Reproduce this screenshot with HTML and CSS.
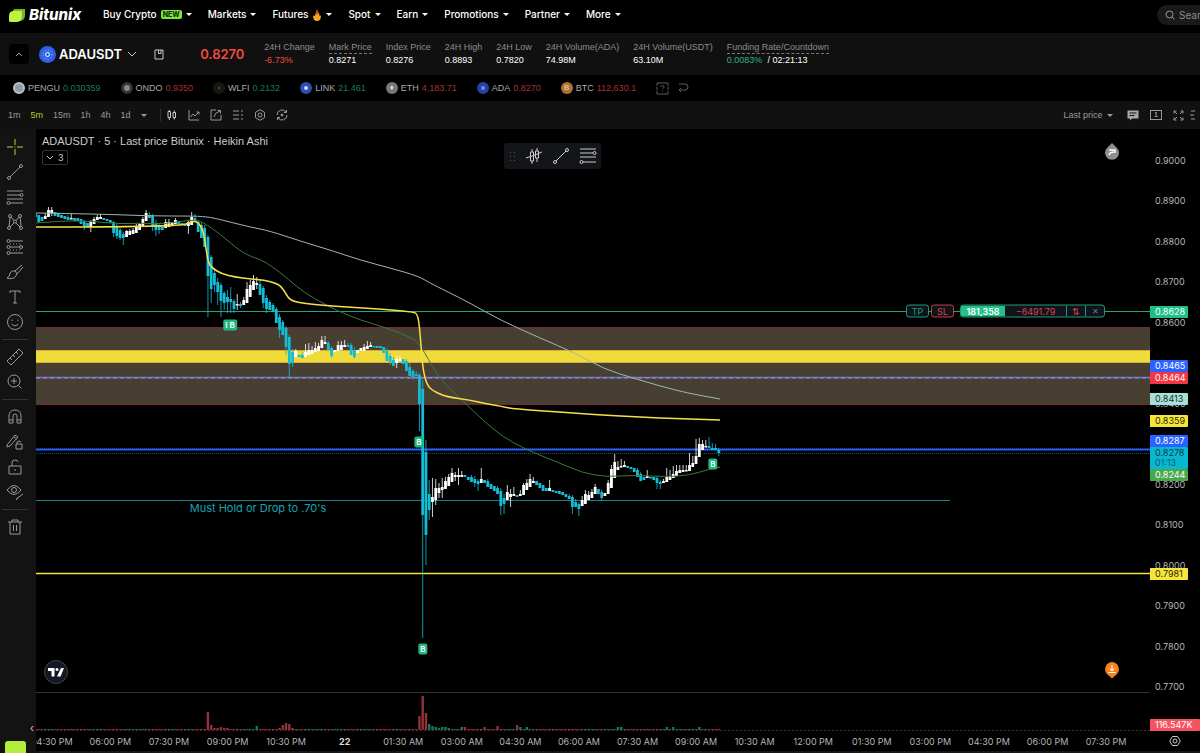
FILE: index.html
```html
<!DOCTYPE html>
<html lang="en">
<head>
  <meta charset="UTF-8" />
  <meta name="viewport" content="width=device-width, initial-scale=1.0"/>
  <title>ADAUSDT | Bitunix</title>
  <link rel="stylesheet" href="styles.css">
</head>
<body>
  <header class="nav">
    <a href="#" class="brand">
      <svg width="16" height="13" viewBox="0 0 16 13"><path d="M4 1.5Q4 0 6 0H16V6Q16 12 10 12H9Z" fill="#7fae28"/><path d="M0 7Q0 2 5 2H13V7Q13 13 7 13H1.5Q0 13 0 11.500Z" fill="#b9f641"/></svg>
      <span>Bitunix</span>
    </a>
    <nav class="menu">
      <a href="#">Buy Crypto <span class="new">NEW</span><i class="caret"></i></a>
      <a href="#">Markets<i class="caret"></i></a>
      <a href="#">Futures
        <svg class="flame" width="8" height="12" viewBox="0 0 8 12"><path d="M4 2Q7 5 6.500 7L8 6.500Q8 12 4 12Q0 12 0 6.500L2 7Q2 4 4 2Z" fill="#f6a61c"/><path d="M4 0Q6 3 5 5.500H3Q3 2 4 0Z" fill="#d9481c"/></svg>
        <i class="caret"></i></a>
      <a href="#">Spot<i class="caret"></i></a>
      <a href="#">Earn<i class="caret"></i></a>
      <a href="#">Promotions<i class="caret"></i></a>
      <a href="#">Partner<i class="caret"></i></a>
      <a href="#">More<i class="caret"></i></a>
    </nav>
    <label class="search">
      <svg width="10" height="10" viewBox="0 0 10 10" class="line"><circle cx="4.500" cy="4.500" r="3.500"/><path d="M7 7l2.500 2.500"/></svg>
      <input type="text" placeholder="Search" aria-label="Search">
    </label>
  </header>

  <section class="info">
    <button class="fold" aria-label="Collapse"><svg width="8" height="5" viewBox="0 0 8 5" class="line"><path d="M1 4l3-3 3 3"/></svg></button>
    <button class="pair">
      <svg width="17" height="17" viewBox="0 0 17 17"><circle cx="8.500" cy="8.500" r="8.500" fill="#2f62e8"/><circle cx="8.500" cy="8.500" r="2" fill="none" stroke="#fff"/><circle cx="8.500" cy="8.500" r="4.500" fill="none" stroke="#a9c0ff" stroke-dasharray="1 2"/></svg>
      <span>ADAUSDT</span>
      <svg width="10" height="6" viewBox="0 0 10 6" class="line bright"><path d="M1 1l4 4 4-4"/></svg>
    </button>
    <button class="book" aria-label="Contract info"><svg width="10" height="11" viewBox="0 0 10 11" class="line bright"><path d="M1 1h8v9H1zM4.500 1v3.500H7V1"/></svg></button>
    <strong class="last">0.8270</strong>
    <dl class="stats">
      <div><dt>24H Change</dt><dd class="down">-6.73%</dd></div>
      <div><dt class="hint">Mark Price</dt><dd>0.8271</dd></div>
      <div><dt>Index Price</dt><dd>0.8276</dd></div>
      <div><dt>24H High</dt><dd>0.8893</dd></div>
      <div><dt>24H Low</dt><dd>0.7820</dd></div>
      <div><dt>24H Volume(ADA)</dt><dd>74.98M</dd></div>
      <div><dt>24H Volume(USDT)</dt><dd>63.10M</dd></div>
      <div><dt class="hint">Funding Rate/Countdown</dt><dd><span class="up">0.0083%</span>&nbsp; / 02:21:13</dd></div>
    </dl>
  </section>

  <section class="strip">
    <a href="#"><i class="coin pengu"></i>PENGU <b class="up">0.030359</b></a>
    <a href="#"><i class="coin ondo"></i>ONDO <b class="down">0.9350</b></a>
    <a href="#"><i class="coin wlfi"></i>WLFI <b class="up">0.2132</b></a>
    <a href="#"><i class="coin link"></i>LINK <b class="up">21.461</b></a>
    <a href="#"><i class="coin eth">♦</i>ETH <b class="down">4,183.71</b></a>
    <a href="#"><i class="coin ada"></i>ADA <b class="down">0.8270</b></a>
    <a href="#"><i class="coin btc">B</i>BTC <b class="down">112,630.1</b></a>
    <span class="strip-tools">
      <svg width="13" height="13" viewBox="0 0 13 13" class="line"><path d="M1 4V1h11v3M1 9v3h11V9M1 5v3M12 5v3M5 5q0-1.500 1.500-1.500T8 5Q8 6 6.500 7M6.500 8.500v1"/></svg>
      <svg width="11" height="10" viewBox="0 0 11 10" class="line"><path d="M1 1h6q3 0 3 3t-3 3H1M3 5L1 7l2 2"/></svg>
    </span>
  </section>

  <section class="toolbar">
    <div class="frames">
      <button>1m</button><button class="on">5m</button><button>15m</button><button>1h</button><button>4h</button><button>1d</button>
      <button aria-label="More intervals"><i class="caret"></i></button>
    </div>
    <div class="tools">
      <button aria-label="Candles"><svg width="12" height="12" viewBox="0 0 12 12" class="line bright"><path d="M2 2.500h2.500v6H2zM7 3.500h2.500v5H7zM3.300 1v1.500M3.300 8.500V11M8.300 1.500v2M8.300 8.500v2"/></svg></button>
      <button aria-label="Indicators"><svg width="12" height="12" viewBox="0 0 12 12" class="line"><path d="M1 1v10h10M2.500 8L5 5l2 2 4-4M8.500 3H11v2.500"/></svg></button>
      <button aria-label="Share"><svg width="12" height="12" viewBox="0 0 12 12" class="line"><path d="M6 1H1v10h10V6M4 8q0-4 6-6M7.500 1.500h3v3"/></svg></button>
      <button aria-label="List"><svg width="12" height="12" viewBox="0 0 12 12" class="line"><path d="M1 2h6M1 6h6M1 10h6M9 2h2M9 6h2M9 10h2"/></svg></button>
      <button aria-label="Settings"><svg width="12" height="12" viewBox="0 0 12 12" class="line"><path d="M6 .7l4.500 2.600v5.400L6 11.300 1.500 8.700V3.300z"/><circle cx="6" cy="6" r="2"/></svg></button>
      <button aria-label="Reset"><svg width="12" height="12" viewBox="0 0 12 12" class="line"><path d="M1 6a5 5 0 0 1 9-3M10.500 1v2.500H8M11 6a5 5 0 0 1-9 3M1.500 11V8.500H4"/><circle cx="6" cy="6" r="1" fill="#999"/></svg></button>
    </div>
    <div class="tools-right">
      <button>Last price <i class="caret"></i></button>
      <button aria-label="Comments"><svg width="12" height="11" viewBox="0 0 12 11"><path d="M.5.500h11v8H5L3 10.500v-2H.5z" fill="#aaa"/><path d="M2.500 3h7M2.500 5.500h5" stroke="#111"/></svg></button>
      <button class="one" aria-label="Layout">1</button>
      <button aria-label="Fullscreen"><svg width="11" height="11" viewBox="0 0 11 11" class="line"><path d="M1 3.500V1h2.500M7.500 1H10v2.500M10 7.500V10H7.500M3.500 10H1V7.500M1 1l3 3M10 1L7 4M10 10L7 7M1 10l3-3"/></svg></button>
      <button aria-label="Panel"><svg width="5" height="10" viewBox="0 0 5 10" class="line"><path d="M1 1h4M0 5h4M1 9h4"/></svg></button>
    </div>
  </section>

  <main class="chart">
    <aside class="draw">
      <button aria-label="Cross"><svg class="line lime" width="18" height="18" viewBox="0 0 18 18"><path d="M9 1v6M9 11v6M1 9h6M11 9h6M9 8.500v1"/></svg></button>
      <button aria-label="Trend line"><svg class="line" width="18" height="18" viewBox="0 0 18 18"><circle cx="3" cy="15" r="1.500"/><circle cx="15" cy="3" r="1.500"/><path d="M4 14L14 4"/></svg></button>
      <button aria-label="Fib"><svg class="line" width="18" height="18" viewBox="0 0 18 18"><path d="M1 3h16M1 7h13M1 11h16M4 15h13"/><circle cx="15.500" cy="7" r="1.500"/><circle cx="2.500" cy="15" r="1.500"/></svg></button>
      <button aria-label="Pattern"><svg class="line" width="18" height="18" viewBox="0 0 18 18"><path d="M3 13.500L4 4.500M5 4l3 3.500M10 7.500L13 4M14.200 4.500l.8 9M4 14l4-4M14 14l-4-4"/><circle cx="3" cy="15" r="1.500"/><circle cx="4" cy="3" r="1.500"/><circle cx="14" cy="3" r="1.500"/><circle cx="15" cy="15" r="1.500"/><circle cx="9" cy="8.500" r="1.500"/></svg></button>
      <button aria-label="Position"><svg class="line" width="18" height="18" viewBox="0 0 18 18"><path d="M4 3h13M4 9h9.500M4 15h13" /><path d="M4 6h12M4 12h12" stroke-dasharray="1 2"/><circle cx="2.500" cy="3" r="1.500"/><circle cx="2.500" cy="9" r="1.500"/><circle cx="15" cy="9" r="1.500"/><circle cx="2.500" cy="15" r="1.500"/></svg></button>
      <button aria-label="Brush"><svg class="line" width="18" height="18" viewBox="0 0 18 18"><path d="M1 15q3-1 3-5 2-3 5-2 3 2 1 5-3 4-9 2zM9 8l7-6M11 11l6-7"/></svg></button>
      <button aria-label="Text"><svg class="line" width="18" height="18" viewBox="0 0 18 18"><path d="M4 5V3h10v2M9 3v12M7 15h4"/></svg></button>
      <button aria-label="Emoji"><svg class="line" width="18" height="18" viewBox="0 0 18 18"><circle cx="9" cy="9" r="7.500"/><path d="M6 6.500v1.500M12 6.500v1.500M5.500 11q3.500 3.500 7 0"/></svg></button>
      <hr>
      <button aria-label="Measure"><svg class="line" width="18" height="18" viewBox="0 0 18 18"><path d="M1 13L13 1l4 4L5 17zM4 10l2 2M7 7l2 2M10 4l2 2"/></svg></button>
      <button aria-label="Zoom"><svg class="line" width="18" height="18" viewBox="0 0 18 18"><circle cx="8" cy="8" r="6"/><path d="M12.500 12.500l3 3M8 5v6M5 8h6"/></svg></button>
      <hr>
      <button aria-label="Magnet"><svg class="line" width="18" height="18" viewBox="0 0 18 18"><path d="M3 15V8q0-6 6-6t6 6v7h-4V8q0-2-2-2T7 8v7zM3 12h4M11 12h4"/></svg></button>
      <button aria-label="Stay in drawing mode"><svg class="line" width="18" height="18" viewBox="0 0 18 18"><path d="M1 12L9 2l3 2-8 9-3 1zM8 4l3 2M10 11h6v5h-6zM11 11V9q2-2 4 0"/></svg></button>
      <button aria-label="Lock"><svg class="line" width="18" height="18" viewBox="0 0 18 18"><path d="M3 8h12v8H3zM6 8V5q0-3 3-3t3 2M9 11v2"/></svg></button>
      <button aria-label="Hide"><svg class="line" width="18" height="18" viewBox="0 0 18 18"><path d="M1 7q7-9 14 0-7 9-14 0zM11 16q0-2 2-2l4-3M12 15l-2 2"/><circle cx="8" cy="7" r="2.500"/></svg></button>
      <hr>
      <button aria-label="Remove"><svg class="line" width="18" height="18" viewBox="0 0 18 18"><path d="M2 4h14M4 4v12h10V4M6 4V2h6v2M7.500 7v6M10.500 7v6"/></svg></button>
      <div class="draw-foot">
        <span class="collapse">‹</span>
        <button class="help" aria-label="Help"></button>
      </div>
    </aside>

    <div class="board">
      <div class="plot" id="plot">
        <svg class="series" id="series" viewBox="36 129 1114 602" preserveAspectRatio="none"></svg>

        <div class="legend">
          <div class="legend-title">ADAUSDT · 5 · Last price Bitunix · Heikin Ashi</div>
          <button class="legend-count"><svg width="8" height="5" viewBox="0 0 8 5" class="line bright"><path d="M1 1l3 3 3-3"/></svg>3</button>
        </div>

        <div class="favs">
          <svg width="6" height="9" viewBox="0 0 6 9" fill="#555"><path d="M0 0h1v1H0zM4 0h1v1H4zM0 4h1v1H0zM4 4h1v1H4zM0 8h1v1H0zM4 8h1v1H4z"/></svg>
          <svg class="line bright" width="18" height="18" viewBox="0 0 18 18"><path d="M5.500 5h3v9h-3zM10.500 4h3v7h-3zM7 2v3M7 14v3M12 1v3M12 11v4M1 11l3-1 6-2 7-3"/></svg>
          <svg class="line bright" width="18" height="18" viewBox="0 0 18 18"><circle cx="3" cy="15" r="1.500"/><circle cx="15" cy="3" r="1.500"/><path d="M4 14L14 4"/></svg>
          <svg class="line bright" width="18" height="18" viewBox="0 0 18 18"><path d="M1 2h16M1 6h13M1 10h16M4 15h13"/><circle cx="15.500" cy="6" r="1.500"/><circle cx="2.500" cy="15" r="1.500"/></svg>
        </div>

        <svg class="drop" width="16" height="19" viewBox="0 0 16 19"><path d="M8 1l4 4a7 7 0 1 1-8 0z" fill="#8f8f8f"/><path d="M5 13q1-3 5-3M5 8h6M9 8l2 0v3" stroke="#fff" stroke-width="1.500" fill="none"/></svg>
        <svg class="pin" width="16" height="18" viewBox="0 0 16 18"><path d="M8 17.500L3 13a7 7 0 1 1 10 0z" fill="#f5821f"/><path d="M8 4v6M5.500 7.500L8 10l2.500-2.500M4.500 11.500h7" stroke="#fff" fill="none"/></svg>
        <a href="#" class="tv" aria-label="TradingView"><svg width="16" height="10" viewBox="0 0 16 10" fill="#fff"><path d="M0 1h6.500v8.500H3.500V4H0zM13 1h3l-3.500 8.500H9z"/><circle cx="9" cy="2.500" r="1.500"/></svg></a>

        <div class="order">
          <button class="tp">TP</button>
          <button class="sl">SL</button>
          <div class="position"><b>181,358</b><span>−6491.79</span><button aria-label="Reverse">⇅</button><button class="x" aria-label="Close">✕</button></div>
        </div>
        <div class="note">Must Hold or Drop to .70's</div>
      </div>
      <div class="prices" id="prices"></div>
      <div class="times" id="times"></div>
      <button class="axis-gear" aria-label="Scale settings"><svg width="12" height="12" viewBox="0 0 12 12" class="line bright"><path d="M3.500 1.500h5L11.300 6 8.500 10.500h-5L.7 6z"/><circle cx="6" cy="6" r="2"/></svg></button>
    </div>
  </main>
  <script src="chart.js"></script>
</body>
</html>
```
FILE: styles.css
```css
* { margin: 0; padding: 0; box-sizing: border-box; }

body {
  font-family: Inter, "Liberation Sans", sans-serif;
  font-size: 9px;
  background: #000;
  color: #fff;
  display: flex;
  flex-direction: column;
  height: 100vh;
  overflow: hidden;
}

a { color: inherit; text-decoration: none; }
button { background: none; border: 0; color: inherit; font: inherit; cursor: pointer; }
svg { display: block; flex: none; }

.line { fill: none; stroke: #999; stroke-width: 1; }
.bright { stroke: #ccc; }
.lime { stroke: #b9d62f; }
.up { color: #2bb38a; }
.down { color: #f04a3e; }

.caret {
  display: inline-block;
  vertical-align: middle;
  border: 3px solid transparent;
  border-top: 3px solid currentColor;
  border-bottom: 0;
}

/* top navigation */
.nav {
  height: 33px;
  flex: none;
  display: flex;
  align-items: center;
  padding-left: 9px;
  overflow: hidden;
}

.brand {
  display: flex;
  align-items: center;
  gap: 4px;
  width: 94px;
  font-size: 15px;
  font-weight: 800;
  font-style: italic;
  line-height: 28px;
  padding-bottom: 3px;
}

.menu {
  display: flex;
  gap: 16px;
  font-size: 10px;
  font-weight: 500;
  line-height: 29px;
  padding-bottom: 4px;
}

.menu a { display: flex; align-items: center; gap: 4px; white-space: nowrap; }
.flame { margin: 0 1px; }

.new {
  background: #7be83c;
  color: #14300a;
  font-size: 7px;
  font-weight: 800;
  line-height: 9px;
  padding: 0 2px;
  border-radius: 2px;
}

.search {
  margin: 0 -77px 4px auto;
  width: 120px;
  height: 20px;
  flex: none;
  display: flex;
  align-items: center;
  gap: 4px;
  padding-left: 8px;
  border-radius: 10px;
  background: #1a1a1a;
}

.search input {
  width: 80px;
  background: none;
  border: 0;
  outline: 0;
  color: #ccc;
  font: inherit;
  font-size: 10px;
}

.search input::placeholder { color: #8c8c8c; }

/* pair info */
.info {
  height: 42px;
  flex: none;
  display: flex;
  align-items: center;
  padding-left: 9px;
  background: #101010;
}

.fold {
  width: 20px;
  height: 20px;
  display: grid;
  place-items: center;
  border-radius: 4px;
  background: #000;
}

.pair {
  display: flex;
  align-items: center;
  gap: 3px;
  margin-left: 10px;
  font-size: 13px;
  font-weight: 600;
}

.pair .line { margin-left: 2px; }
.book { margin-left: 17px; }

.last {
  margin-left: 36px;
  width: 64px;
  font-size: 13px;
  font-weight: 600;
  color: #f04a3e;
}

.info .stats, .strip, .toolbar, .legend-title { font-family: "Liberation Sans", Arial, sans-serif; }

.stats { display: flex; gap: 14px; white-space: nowrap; }
.stats dt { height: 12px; line-height: 11px; color: #8c8c8c; }
.stats dd { line-height: 13px; }
.hint { border-bottom: 1px dashed #777; }

/* ticker strip */
.strip {
  height: 26px;
  flex: none;
  display: flex;
  align-items: center;
  gap: 20px;
  padding-left: 13px;
  color: #aaa;
}

.strip a { display: flex; align-items: center; gap: 3px; white-space: nowrap; }
.strip b { font-weight: 400; }
.strip .up { color: #1d7a5c; }
.strip .down { color: #a5332d; }

.coin {
  width: 12px;
  height: 12px;
  border-radius: 50%;
  font-size: 8px;
  font-style: normal;
  line-height: 12px;
  text-align: center;
  color: #ddd;
}

.pengu { background: #8f9aa8; border: 2px solid #b8c0c8; }
.ondo { background: #888; border: 3px solid #333; }
.wlfi { background: #6b6440; border: 5px solid #181812; }
.link { background: #ccd8ff; border: 4px solid #2c50b0; }
.eth { background: #777; }
.ada { background: #6f8fe8; border: 4px solid #2543a0; }
.btc { background: #b3702a; }

.strip-tools { display: flex; align-items: center; gap: 9px; opacity: 0.6; }

/* chart toolbar */
.toolbar {
  height: 28px;
  flex: none;
  display: flex;
  align-items: center;
  padding-left: 8px;
  background: #111;
  color: #999;
}

.frames, .tools, .tools-right { display: flex; align-items: center; }
.frames { gap: 10px; padding-right: 13px; }
.frames .on { color: #a6d02c; }
.tools { gap: 10px; padding-left: 5px; border-left: 1px solid #333; }
.tools-right { margin-left: auto; gap: 11px; padding-right: 5px; }
.tools-right .caret { margin: 0 3px 0 2px; }
.tools-right button:last-child { margin-left: -5px; }
.one { width: 12px; height: 10px; border: 1px solid #999; font-size: 7px; font-weight: 700; line-height: 8px; }

/* chart */
.chart { flex: 1; min-height: 0; display: flex; }

.draw {
  width: 36px;
  flex: none;
  display: flex;
  flex-direction: column;
  padding: 5px 6px 0 0;
  background: #131313;
}

.draw button { height: 25px; flex: none; display: grid; place-items: center; }
.draw hr { border: 0; border-top: 1px solid #333; margin: 5px 2px 4px; }
.draw-foot { margin-top: auto; margin-right: -6px; }
.collapse { display: block; text-align: right; padding-right: 2px; line-height: 12px; font-size: 11px; color: #bbb; }
.draw .help { width: 21px; height: 12px; margin: 7px 0 0 5px; border-radius: 3px 3px 0 0; background: #b4ee3c; }

.board {
  flex: 1;
  min-width: 0;
  display: grid;
  grid-template-columns: 1fr 50px;
  grid-template-rows: 1fr 20px;
  border-bottom: 2px solid #161616;
}

.plot { position: relative; min-height: 0; }
.series { position: absolute; width: 100%; height: 100%; }

.legend { position: absolute; left: 6px; top: 4px; }
.legend-title { font-size: 11px; line-height: 16px; color: #ccc; }

.legend-count {
  display: flex;
  align-items: center;
  gap: 4px;
  height: 15px;
  margin-top: 1px;
  padding: 0 3px;
  border: 1px solid #333;
  border-radius: 2px;
  color: #ccc;
}

.favs {
  position: absolute;
  left: 42%;
  top: 14px;
  width: 97px;
  height: 26px;
  display: flex;
  align-items: center;
  justify-content: space-between;
  padding: 0 4px 0 6px;
  border-radius: 3px;
  background: #131519;
}

.drop { position: absolute; right: 30px; top: 13px; }
.pin { position: absolute; right: 30px; bottom: 52px; }

.tv {
  position: absolute;
  left: 8px;
  bottom: 47px;
  width: 24px;
  height: 24px;
  display: grid;
  place-items: center;
  border: 1px solid #3c4250;
  border-radius: 50%;
  background: #141824;
}

.order {
  position: absolute;
  right: 45px;
  top: 30.300%;
  transform: translateY(-50%);
  display: flex;
  gap: 2px;
  font-size: 9px;
}

.order button { line-height: 11px; }
.tp, .sl { width: 23px; border: 1px solid #1f9c73; border-radius: 3px; background: #10131c; color: #1f9c73; }
.order .sl { border-color: #c43c44; color: #d8444c; }

.position {
  display: flex;
  margin-left: 4px;
  border: 1px solid #1f9c73;
  border-radius: 3px;
  background: #10131c;
  line-height: 11px;
  color: #d8444c;
  overflow: hidden;
}

.position b { width: 44px; text-align: center; background: #26c08c; color: #fff; font-weight: 600; }
.position span { width: 61px; text-align: center; }
.position button { width: 19px; border-left: 1px solid #1f9c73; }
.position .x { font-size: 8px; color: #777; }

.note {
  position: absolute;
  left: 13.800%;
  top: 61.800%;
  font-size: 11px;
  line-height: 15px;
  color: #16a3b5;
}

.marker {
  position: absolute;
  transform: translate(-50%, -50%);
  padding: 0 2px;
  border-radius: 2px;
  background: #1fb87e;
  font-size: 8px;
  font-weight: 600;
  line-height: 11px;
  white-space: nowrap;
}

/* axes */
.prices { position: relative; color: #b5b5b5; }
.prices span { position: absolute; left: 0; padding: 0 5px; line-height: 12px; transform: translateY(-50%); }
.prices .tag { width: 38px; border-radius: 0 1px 1px 0; }
.prices .wide { width: 50px; }

.times { position: relative; overflow: hidden; color: #b5b5b5; }
.times span { position: absolute; top: 4px; line-height: 13px; transform: translateX(-50%); white-space: nowrap; }
.times .day { font-weight: 700; color: #ddd; }
.axis-gear { display: grid; place-items: center; }
```
FILE: chart.js
```javascript
const VIEW = { x: 36, y: 129, w: 1114, h: 602 };
const STEP = 3.254;
const UP = "#fff";
const DOWN = "#14bdd6";

// u/d, body top, body bottom, high, low
const candles = `
d 213 217;d 215 222;d 217 221;u 216 219 213;u 210 217 207;u 210 213 207 216;d 212 216;d 213 217;d 215 218;d 216 219
d 217 220 215;u 218 219 214;d 218 221;d 218 221;d 219 224;d 221 226 220 230;d 223 227;u 221 227 220 232;u 219 224 217;u 217 220 215
u 217 219 214;d 218 220;d 219 221;d 220 223;d 222 233 221 237;d 226 236 224 239;d 230 238 228 240;d 234 238 232 245;u 231 237 230;u 231 235 229
u 230 234 228;u 226 233 224;u 224 230 223;u 219 226 217;u 213 221 210;d 215 218 212;d 216 226 214 231;d 223 230 220 236;d 226 230 224 234;d 227 230
u 222 228 219;u 222 227 219;u 222 225;u 220 224 218;d 221 224;d 223 225;d 224 226;u 222 226 220 234;u 217 225 212;d 218 221 214
d 222 232 220;d 225 238 223;d 228 247 225;d 237 276 235 317;d 257 289 255 303;d 273 285 270 292;d 282 292 278 305;d 285 301 283 317;d 293 303 291 310;d 297 302 290 313
d 299 302 287 313;d 301 309 299 313;u 304 305 294 310;d 304 306 302 308;u 300 305 297;u 289 303 282;u 285 297 280;u 281 290 275;u 283 285 277 289;d 284 295 280
d 288 303 286 308;d 298 309 295 313;d 302 310 300;d 305 312 303;d 309 323 307;d 317 330 314 338;d 322 335 320;d 328 347 326 355;d 337 364 335 378;d 352 363 349 367
u 351 357 349;d 355 357;d 355 358 352;u 352 357 344;u 350 355 343;u 350 354 346;u 348 352 342;u 346 351 343;u 340 348 336;u 342 344 336
d 343 350 341;d 348 356 346 358;u 350 352;u 345 351 341;u 345 350 341;u 345 347 340;d 345 347 343;d 345 355 343;d 350 357 347 359;u 350 353
u 348 351;u 347 351 344;u 346 349 341;u 345 347 342;d 346 347;d 346 348;d 346 348;d 347 353;d 351 361 348;d 356 362 353 365
d 360 366 357;u 359 363 356 368;u 359 361 356;d 359 364;d 361 371 359;d 367 376 363;d 371 377 369 380;d 374 376 371;d 375 404 373 431;d 389 515 380 638
d 452 535 440 565;d 494 510 480 520;u 497 502 478 517;u 488 500 479 505;u 488 493 483 498;u 487 490 478 498;u 481 489 477;u 477 486 474;u 473 482 468;u 475 477 472 481
u 475 477 468 485;u 475 477 471;d 475 477;d 477 480;d 477 482 475;d 479 483 476 487;d 481 484 479 491;u 479 483 468;d 480 483;d 481 487 479
d 484 489;d 486 491;d 488 494 486;d 491 506 488 515;d 498 504 494 514;u 492 500 485;u 494 497 489 507;u 494 496 487;d 495 497;u 494 496 490
u 485 495 483;u 483 490 479;u 479 487 474;u 481 483 477;d 481 485;d 483 488;d 485 491;d 488 491;u 488 491 480;d 490 492
d 491 493;d 491 494;d 492 495;d 494 497;d 496 499 494;d 497 507 495 514;d 502 507 499;d 504 509 502 516;u 500 506 496;u 494 504 490
u 495 500 491;u 492 498 489;u 487 494 484;d 489 494;d 492 498 490 501;u 493 496;u 483 494 480;u 469 488 465;u 462 478 454;u 467 470 461
u 466 467 459;u 465 467 461;d 466 468;d 467 469;d 468 472;d 470 477 468;d 474 481 472;d 477 480;u 476 478 470;d 477 478
d 477 480;d 478 483 476 489;d 482 484 480 489;u 481 483 479;u 477 482 468;u 476 480 470;u 474 478 466;u 471 476 465;u 470 473 465;u 470 472 465
u 470 471 465;u 465 471 453;u 463 467 456;u 456 464 439;u 444 457 438;u 444 450 440;u 446 447 440;d 446 448 437;d 448 450 443;d 448 450 444
d 450 453 448 456`.trim().split(/[;\n]/).map(r => r.split(" "));

// candle index -> volume bar height
const spikes = {
  53: 18, 54: 5, 55: 2, 56: 2, 57: 3, 58: 2, 59: 2, 68: 4, 75: 2, 76: 5, 77: 7, 78: 6, 79: 2,
  118: 14, 119: 34, 120: 17, 121: 6, 122: 4, 123: 3, 124: 2, 125: 3, 126: 3, 127: 2,
  131: 3, 132: 3, 138: 3, 142: 4, 148: 5, 149: 3, 151: 3, 179: 3, 180: 3, 194: 3, 196: 3, 204: 3
};

const averages = [
  { color: "#9fb8b0", width: 1, points: "36,213 100,214 150,216 195,216 210,217 230,222 250,227 270,231 300,241 330,250 360,260 390,268 418,276 430,283 440,288 470,303 500,320 540,338 575,353 604,369 633,378 660,386 687,393 720,399" },
  { color: "#397a3c", width: 1, points: "36,223 60,221 90,221 120,224 140,223 165,224 190,220 200,221 207,225 220,234 240,251 252,257 262,260 280,272 297,287 313,298 340,312 360,320 387,328 410,337 420,344 437,375 450,389 467,405 485,422 503,437 527,450 557,462 583,473 607,477 633,475 667,477 690,475 710,469 720,467" },
  { color: "#f5e04a", width: 1.5, points: "36,227 180,227 192,221 198,222 203,230 205,242 208,262 212,268 222,274 235,277 250,279 264,280 275,283 281,286 286,294 290,300 300,303 330,306 380,309 414,312 417,314 419,322 421,345 423,370 427,385 433,391 447,397 470,400 487,404 500,406 513,409 560,412 600,415 660,418 720,420" }
];

const svg = document.getElementById("series");

function draw(tag, attrs) {
  const el = document.createElementNS("http://www.w3.org/2000/svg", tag);
  for (const key in attrs) el.setAttribute(key, attrs[key]);
  svg.appendChild(el);
}

function level(y, color, width = 1, dash = "none", x2 = 1150) {
  draw("line", { x1: 36, x2, y1: y, y2: y, stroke: color, "stroke-width": width, "stroke-dasharray": dash });
}

// rounds the corners by curving through the midpoints
function smooth(points) {
  const p = points.split(" ").map(s => s.split(",").map(Number));
  let d = `M${p[0]}`;
  for (let i = 1; i < p.length - 1; i++) {
    d += `Q${p[i]} ${(p[i][0] + p[i + 1][0]) / 2},${(p[i][1] + p[i + 1][1]) / 2}`;
  }
  return d + `L${p[p.length - 1]}`;
}

// supply zone
draw("rect", { x: 36, y: 327, width: 1114, height: 78, fill: "#483f33" });
level(327.5, "#7d2630");
level(404.5, "#7d2630");
draw("rect", { x: 36, y: 350, width: 1114, height: 13, fill: "#efdb3a" });
level(350.5, "#e0a836");
level(362.5, "#e0a836");

level(311.5, "#1fa873");
level(377.5, "#6478e0", 1.5);
level(378, "#a98fb0", 1, "4 3");
level(449.5, "#2962ff", 2);
level(453.5, "#0d5a66", 1, "1 1");
level(500.5, "#128291", 1, "none", 950);
level(573.5, "#f2e440", 1.5);
level(692.5, "#333");
level(730.5, "#5c2226", 1, "2 2");

candles.forEach(([dir, top, bottom, high = top, low = bottom], i) => {
  const x = 422.7 + STEP * (i - 119);
  const color = dir === "u" ? UP : DOWN;
  draw("rect", { x: x - 0.5, y: high, width: 1, height: low - high, fill: color, opacity: 0.8 });
  draw("rect", { x: x - 1.4, y: top, width: 2.8, height: Math.max(bottom - top, 1.5), fill: color });

  const h = spikes[i] || 1;
  draw("rect", { x: x - 1.2, y: 730 - h, width: 2.4, height: h, fill: dir === "u" || (i > 120 && i < 128) ? "#147a5a" : "#92323a" });
});

averages.forEach(a => draw("path", {
  d: smooth(a.points), fill: "none", stroke: a.color, "stroke-width": a.width
}));

const left = x => (x - VIEW.x) / VIEW.w * 100 + "%";
const top_ = y => (y - VIEW.y) / VIEW.h * 100 + "%";
const priceY = p => 161 + (0.9 - p) * 4046;

[["I B", 230, 325], ["B", 419, 442], ["B", 423, 649], ["B", 713, 464]].forEach(([text, x, y]) => {
  const el = document.createElement("span");
  el.className = "marker";
  el.textContent = text;
  el.style.left = left(x);
  el.style.top = top_(y);
  document.getElementById("plot").appendChild(el);
});

function priceLabel(text, y, bg, color) {
  const el = document.createElement("span");
  el.textContent = text;
  el.style.top = top_(y);
  if (bg) {
    el.className = "tag";
    el.style.background = bg;
    el.style.color = color;
  }
  document.getElementById("prices").appendChild(el);
  return el;
}

for (let p = 90; p >= 77; p--) {
  if (p !== 83 && p !== 85) priceLabel((p / 100).toFixed(4), priceY(p / 100));
}

priceLabel("0.8628", 311.5, "#1fbf87", "#fff");
priceLabel("0.8465", 366, "#2962ff", "#fff");
priceLabel("0.8464", 378, "#f23645", "#fff");
priceLabel("0.8413", 399, "#a9e0d6", "#15302c");
priceLabel("0.8359", 420.5, "#f7e53b", "#2a270a");
priceLabel("0.8287", 441, "#2962ff", "#fff");
priceLabel("0.8278", 453, "#08b8d0", "#063a42");
priceLabel("01:13", 463, "#08b8d0", "#08606d");
priceLabel("0.8244", 475, "#47a84c", "#fff");
priceLabel("0.7981", 573.5, "#f7e53b", "#2a270a");
priceLabel("116.547K", 725, "#f7525f", "#fff").classList.add("wide");

["04:30 PM", "06:00 PM", "07:30 PM", "09:00 PM", "10:30 PM", "22", "01:30 AM", "03:00 AM", "04:30 AM", "06:00 AM",
 "07:30 AM", "09:00 AM", "10:30 AM", "12:00 PM", "01:30 PM", "03:00 PM", "04:30 PM", "06:00 PM", "07:30 PM"].forEach((text, i) => {
  const el = document.createElement("span");
  el.textContent = text;
  if (text === "22") el.className = "day";
  el.style.left = left(51.8 + STEP * 18 * i);
  document.getElementById("times").appendChild(el);
});
```
